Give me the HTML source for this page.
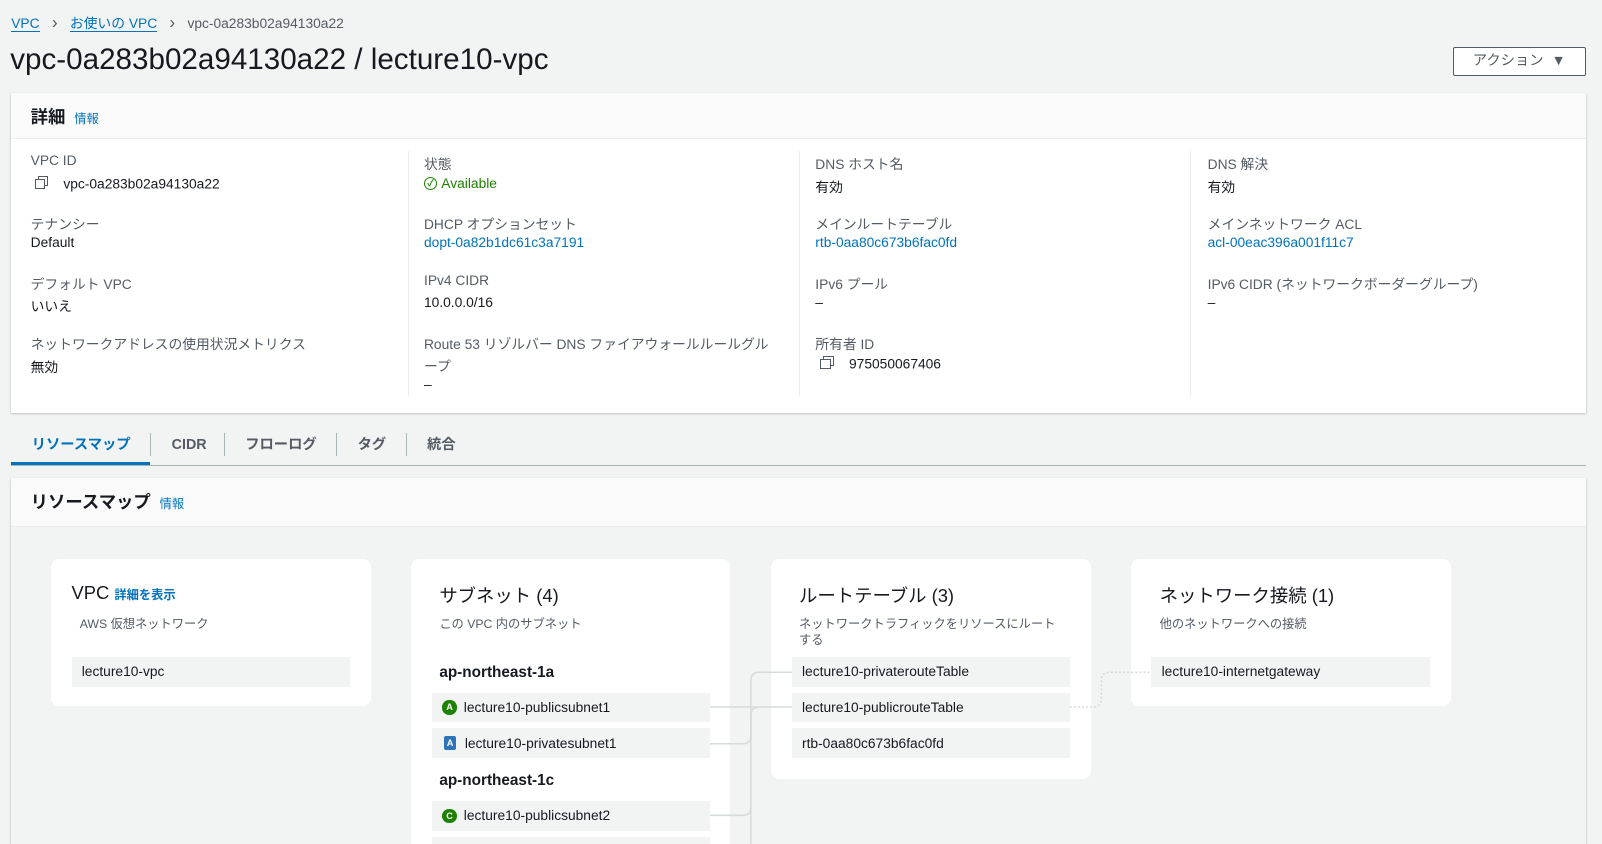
<!DOCTYPE html>
<html><head><meta charset="utf-8"><style>
html,body{margin:0;padding:0;width:1602px;height:844px;overflow:hidden;}
body{background:#f2f3f3;}
#r{zoom:1.02168;position:relative;width:1568px;height:826px;overflow:hidden;font-family:"Liberation Sans","Noto Sans CJK JP",sans-serif;color:#16191f;font-size:13.5px;}
.a{position:absolute;white-space:nowrap;}
.lnk{color:#0073bb;}
.lb{color:#545b64;font-size:13.5px;}
.pn{position:absolute;background:#fff;box-shadow:0 1px 2px rgba(0,28,36,.3);}
.card{position:absolute;background:#fff;border-radius:8px;}
.it{position:absolute;background:#f2f3f3;height:29px;display:flex;align-items:center;font-size:13.5px;color:#16191f;padding-left:10px;box-sizing:border-box;}
.badge{display:inline-block;width:14px;height:14px;border-radius:50%;background:#1d8102;color:#fff;font-size:9px;font-weight:bold;text-align:center;line-height:14px;margin-right:7px;flex:none;}
.ct{font-size:18px;color:#16191f;}
.cs{font-size:12px;color:#545b64;}
.div{position:absolute;width:1px;background:#eaeded;}
.tab{position:absolute;top:426px;height:20px;line-height:20px;font-size:14px;font-weight:bold;color:#545b64;}
.cp{display:inline-block;position:relative;width:14px;height:14px;margin-right:14px;vertical-align:-2px;}
.cp:before{content:"";position:absolute;left:3px;top:0;width:8px;height:8px;border:1.5px solid #545b64;}
.cp:after{content:"";position:absolute;left:0;top:3px;width:8px;height:8px;border:1.5px solid #545b64;background:#fff;}
</style></head><body><div id="r">
<div class="a" style="left:11px;top:12px;font-size:13.5px"><span class="lnk" style="border-bottom:1px solid #0073bb">VPC</span><span style="color:#545b64;margin:0 12px;font-size:17px">&#x203A;</span><span class="lnk" style="border-bottom:1px solid #0073bb">お使いの VPC</span><span style="color:#545b64;margin:0 12px;font-size:17px">&#x203A;</span><span style="color:#545b64">vpc-0a283b02a94130a22</span></div>
<div class="a" style="left:10px;top:42px;font-size:29px">vpc-0a283b02a94130a22 / lecture10-vpc</div>
<div class="a" style="left:1422px;top:46px;width:128px;height:26px;border:1px solid #545b64;border-radius:2px;background:#fff;text-align:center;line-height:26px;font-size:14px;color:#545b64">アクション &nbsp;▼</div>

<div class="pn" style="left:11px;top:91px;width:1541px;height:313px">
 <div style="height:44px;background:#fafafa;border-bottom:1px solid #eaeded"></div>
</div>
<div class="a" style="left:30px;top:101px;font-size:17px;font-weight:bold">詳細 <span class="lnk" style="font-size:12px;font-weight:normal;margin-left:4px">情報</span></div>
<div class="div" style="left:399px;top:148px;height:240px"></div>
<div class="div" style="left:782px;top:148px;height:240px"></div>
<div class="div" style="left:1165px;top:148px;height:240px"></div>

<div class="a lb" style="left:30px;top:150px">VPC ID</div>
<div class="a" style="left:34px;top:172px"><span class="cp"></span>vpc-0a283b02a94130a22</div>
<div class="a lb" style="left:30px;top:208px">テナンシー</div>
<div class="a" style="left:30px;top:230px">Default</div>
<div class="a lb" style="left:30px;top:267px">デフォルト VPC</div>
<div class="a" style="left:30px;top:289px">いいえ</div>
<div class="a lb" style="left:30px;top:326px">ネットワークアドレスの使用状況メトリクス</div>
<div class="a" style="left:30px;top:348px">無効</div>

<div class="a lb" style="left:415px;top:150px">状態</div>
<div class="a" style="left:415px;top:172px;color:#1d8102;display:flex;align-items:center"><span style="display:inline-block;width:11px;height:11px;border:1.5px solid #1d8102;border-radius:50%;text-align:center;line-height:11px;font-size:9px;font-weight:bold;margin-right:4px">✓</span>Available</div>
<div class="a lb" style="left:415px;top:208px">DHCP オプションセット</div>
<div class="a lnk" style="left:415px;top:230px">dopt-0a82b1dc61c3a7191</div>
<div class="a lb" style="left:415px;top:267px">IPv4 CIDR</div>
<div class="a" style="left:415px;top:289px">10.0.0.0/16</div>
<div class="a lb" style="left:415px;top:326px">Route 53 リゾルバー DNS ファイアウォールルールグル</div>
<div class="a lb" style="left:415px;top:347px">ープ</div>
<div class="a" style="left:415px;top:369px">–</div>

<div class="a lb" style="left:798px;top:150px">DNS ホスト名</div>
<div class="a" style="left:798px;top:172px">有効</div>
<div class="a lb" style="left:798px;top:208px">メインルートテーブル</div>
<div class="a lnk" style="left:798px;top:230px">rtb-0aa80c673b6fac0fd</div>
<div class="a lb" style="left:798px;top:267px">IPv6 プール</div>
<div class="a" style="left:798px;top:289px">–</div>
<div class="a lb" style="left:798px;top:326px">所有者 ID</div>
<div class="a" style="left:803px;top:348px"><span class="cp"></span>975050067406</div>

<div class="a lb" style="left:1182px;top:150px">DNS 解決</div>
<div class="a" style="left:1182px;top:172px">有効</div>
<div class="a lb" style="left:1182px;top:208px">メインネットワーク ACL</div>
<div class="a lnk" style="left:1182px;top:230px">acl-00eac396a001f11c7</div>
<div class="a lb" style="left:1182px;top:267px">IPv6 CIDR (ネットワークボーダーグループ)</div>
<div class="a" style="left:1182px;top:289px">–</div>

<div class="a" style="left:11px;top:455px;width:1541px;height:1px;background:#aab7b8"></div>
<div class="a" style="left:11px;top:452px;width:136px;height:3px;background:#0073bb"></div>
<div class="tab" style="left:31px;color:#0073bb">リソースマップ</div>
<div class="a" style="left:147px;top:424px;width:1px;height:22px;background:#aab7b8"></div>
<div class="tab" style="left:168px">CIDR</div>
<div class="a" style="left:219px;top:424px;width:1px;height:22px;background:#aab7b8"></div>
<div class="tab" style="left:240px">フローログ</div>
<div class="a" style="left:329px;top:424px;width:1px;height:22px;background:#aab7b8"></div>
<div class="tab" style="left:350px">タグ</div>
<div class="a" style="left:397px;top:424px;width:1px;height:22px;background:#aab7b8"></div>
<div class="tab" style="left:418px">統合</div>

<div class="pn" style="left:11px;top:468px;width:1541px;height:400px;background:#f2f3f3">
 <div style="height:47px;background:#fafafa;border-bottom:1px solid #eaeded"></div>
</div>
<div class="a" style="left:30px;top:478px;font-size:17px;font-weight:bold">リソースマップ <span class="lnk" style="font-size:12px;font-weight:normal;margin-left:4px">情報</span></div>

<div class="card" style="left:50px;top:547px;width:313px;height:144px"></div>
<div class="a ct" style="left:70px;top:570px">VPC <span class="lnk" style="font-size:12px;font-weight:bold">詳細を表示</span></div>
<div class="a cs" style="left:78px;top:601px">AWS 仮想ネットワーク</div>
<div class="it" style="left:70px;top:643px;width:273px">lecture10-vpc</div>

<div class="card" style="left:402px;top:547px;width:313px;height:320px"></div>
<div class="a ct" style="left:430px;top:570px">サブネット (4)</div>
<div class="a cs" style="left:430px;top:601px">この VPC 内のサブネット</div>
<div class="a" style="left:430px;top:650px;font-size:15px;font-weight:bold">ap-northeast-1a</div>
<div class="it" style="left:423px;top:678px;width:272px"><span class="badge">A</span>lecture10-publicsubnet1</div>
<div class="it" style="left:423px;top:713px;width:272px"><span class="badge" style="border-radius:2px;background:#2e73b8;width:11px;margin:0 9px 0 2px">A</span>lecture10-privatesubnet1</div>
<div class="a" style="left:430px;top:756px;font-size:15px;font-weight:bold">ap-northeast-1c</div>
<div class="it" style="left:423px;top:784px;width:272px"><span class="badge">C</span>lecture10-publicsubnet2</div>
<div class="it" style="left:423px;top:819px;width:272px"></div>

<div class="card" style="left:755px;top:547px;width:313px;height:215px"></div>
<div class="a ct" style="left:782px;top:570px">ルートテーブル (3)</div>
<div class="a cs" style="left:782px;top:601px">ネットワークトラフィックをリソースにルート</div>
<div class="a cs" style="left:782px;top:617px">する</div>
<div class="it" style="left:775px;top:643px;width:272px">lecture10-privaterouteTable</div>
<div class="it" style="left:775px;top:678px;width:272px">lecture10-publicrouteTable</div>
<div class="it" style="left:775px;top:713px;width:272px">rtb-0aa80c673b6fac0fd</div>

<div class="card" style="left:1107px;top:547px;width:313px;height:144px"></div>
<div class="a ct" style="left:1135px;top:570px">ネットワーク接続 (1)</div>
<div class="a cs" style="left:1135px;top:601px">他のネットワークへの接続</div>
<div class="it" style="left:1127px;top:643px;width:273px">lecture10-internetgateway</div>

<svg class="a" style="left:0;top:0" width="1568" height="826">
<g fill="none" stroke="#d5dbdb" stroke-width="1.5">
<path d="M695 692 H775"/>
<path d="M695 728 H727 Q735 728 735 720 V666 Q735 658 743 658 H775"/>
<path d="M735 700 Q735 692 743 692"/>
<path d="M695 798 H727 Q735 798 735 790 V700"/>
<path d="M735 790 V826"/>
</g>
<path d="M1047 692 H1070 Q1078 692 1078 684 V666 Q1078 658 1086 658 H1127" fill="none" stroke="#d5dbdb" stroke-width="1.5" stroke-dasharray="2 2"/>
</svg>
</div></body></html>
